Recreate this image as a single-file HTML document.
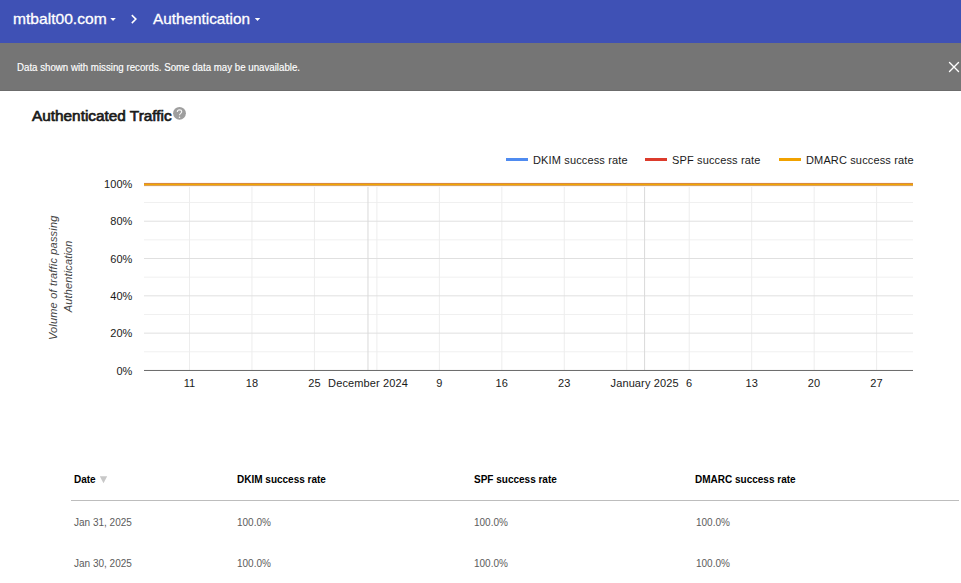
<!DOCTYPE html>
<html><head><meta charset="utf-8">
<style>
html,body{margin:0;padding:0;width:961px;height:583px;overflow:hidden;background:#fff;font-family:"Liberation Sans",sans-serif;}
.hdr{position:absolute;left:0;top:0;width:961px;height:43px;background:#3f51b5;color:#fff;}
.hdr .t{position:absolute;top:10.5px;line-height:16px;font-size:15px;white-space:nowrap;transform-origin:0 0;transform:scaleX(1.02);-webkit-text-stroke:0.3px #fff;}
.banner{position:absolute;left:0;top:43px;width:961px;height:48px;background:#757575;border-bottom:0;}
.banner .msg{position:absolute;left:16.8px;top:17px;line-height:16px;font-size:10px;color:#fff;white-space:nowrap;transform-origin:0 0;transform:scaleX(0.97);-webkit-text-stroke:0.15px #fff;}
.title{position:absolute;left:31.8px;top:107.5px;line-height:16px;font-size:15.5px;font-weight:normal;color:#1a1a1a;white-space:nowrap;transform-origin:0 0;transform:scaleX(0.99);-webkit-text-stroke:0.7px #1a1a1a;}
svg{position:absolute;left:0;top:0;}
.tbl{position:absolute;left:0;top:0;}
.th{position:absolute;font-size:10px;letter-spacing:0px;font-weight:bold;color:#000;white-space:nowrap;}
.td{position:absolute;font-size:10px;letter-spacing:0px;color:#5c5c5c;white-space:nowrap;}
</style></head><body>
<div class="hdr">
  <span class="t" style="left:12.5px;transform:scaleX(1.04)">mtbalt00.com</span>
  <span class="t" style="left:153px">Authentication</span>
</div>
<div class="banner"><span class="msg">Data shown with missing records. Some data may be unavailable.</span></div>
<div class="title">Authenticated Traffic</div>

<svg width="961" height="583" viewBox="0 0 961 583" font-family="Liberation Sans, sans-serif">
  <!-- header icons -->
  <path d="M110.3 18 L115.8 18 L113.05 20.9 Z" fill="#fff"/>
  <path d="M254.8 18 L260.2 18 L257.5 20.9 Z" fill="#fff"/>
  <path d="M131.8 15.1 L135.9 19.1 L131.8 23.1" fill="none" stroke="#fff" stroke-width="1.5"/>
  <!-- close X -->
  <path d="M949.5 62.5 L958.5 71.5 M958.5 62.5 L949.5 71.5" stroke="#fff" stroke-width="1.4" stroke-linecap="round"/>
  <rect x="0" y="90" width="961" height="1" fill="#6c6c6c"/>
  <!-- help icon -->
  <circle cx="179.5" cy="113.3" r="6.4" fill="#9e9e9e"/>
  <path d="M177.3 111.9 C177.3 110.6 178.3 109.9 179.5 109.9 C180.8 109.9 181.7 110.7 181.7 111.8 C181.7 113.3 179.5 113.5 179.5 115.3" fill="none" stroke="#f4f4f4" stroke-width="1.1"/>
  <circle cx="179.5" cy="117.2" r="0.75" fill="#f4f4f4"/>

  <!-- legend -->
  <rect x="506" y="158" width="22" height="3" fill="#4f8bf0"/>
  <text x="533" y="164" font-size="11" fill="#1a1a1a" letter-spacing="0.14">DKIM success rate</text>
  <rect x="645" y="158" width="22" height="3" fill="#dc3b2c"/>
  <text x="672" y="164" font-size="11" fill="#1a1a1a" letter-spacing="0.14">SPF success rate</text>
  <rect x="779" y="158" width="22" height="3" fill="#f1a200"/>
  <text x="806" y="164" font-size="11" fill="#1a1a1a" letter-spacing="0.14">DMARC success rate</text>

  <!-- minor horizontal gridlines -->
  <g fill="#f0f0f0">
    <rect x="144" y="202.06" width="769" height="1"/>
    <rect x="144" y="239.37" width="769" height="1"/>
    <rect x="144" y="276.68" width="769" height="1"/>
    <rect x="144" y="313.99" width="769" height="1"/>
    <rect x="144" y="351.30" width="769" height="1"/>
  </g>
  <!-- vertical weekly gridlines -->
  <g fill="#ededed">
    <rect x="189.00" y="184" width="1" height="186"/>
    <rect x="251.46" y="184" width="1" height="186"/>
    <rect x="313.93" y="184" width="1" height="186"/>
    <rect x="376.39" y="184" width="1" height="186"/>
    <rect x="438.86" y="184" width="1" height="186"/>
    <rect x="501.32" y="184" width="1" height="186"/>
    <rect x="563.78" y="184" width="1" height="186"/>
    <rect x="626.25" y="184" width="1" height="186"/>
    <rect x="688.71" y="184" width="1" height="186"/>
    <rect x="751.17" y="184" width="1" height="186"/>
    <rect x="813.64" y="184" width="1" height="186"/>
    <rect x="876.10" y="184" width="1" height="186"/>
  </g>
  <!-- major horizontal gridlines -->
  <g fill="#e0e0e0">
    <rect x="144" y="220.71" width="769" height="1"/>
    <rect x="144" y="258.02" width="769" height="1"/>
    <rect x="144" y="295.34" width="769" height="1"/>
    <rect x="144" y="332.65" width="769" height="1"/>
  </g>
  <!-- month lines -->
  <g fill="#d9d9d9">
    <rect x="367.47" y="184" width="1" height="186"/>
    <rect x="644.09" y="184" width="1" height="186"/>
  </g>
  <!-- axis -->
  <rect x="144" y="369.96" width="769" height="1" fill="#696969"/>
  <!-- data lines -->
  <rect x="144" y="182" width="769" height="1" fill="#fdf6f1"/>
  <rect x="144" y="183" width="769" height="1" fill="#d88a3e"/>
  <rect x="144" y="184" width="769" height="1" fill="#f2a600"/>
  <rect x="144" y="185" width="769" height="1" fill="#d9a05c"/>
  <rect x="144" y="186" width="769" height="1" fill="#fbf4ee"/>

  <!-- y labels -->
  <g font-size="11" fill="#1a1a1a" text-anchor="end" letter-spacing="0.1">
    <text x="132.5" y="187.5">100%</text>
    <text x="132.5" y="224.5">80%</text>
    <text x="132.5" y="262.5">60%</text>
    <text x="132.5" y="299.5">40%</text>
    <text x="132.5" y="337">20%</text>
    <text x="132.5" y="374.5">0%</text>
  </g>
  <!-- x labels -->
  <g font-size="11" fill="#1a1a1a" text-anchor="middle" letter-spacing="0.12">
    <text x="189.5" y="387">11</text>
    <text x="252" y="387">18</text>
    <text x="314.4" y="387">25</text>
    <text x="368" y="387">December 2024</text>
    <text x="439.4" y="387">9</text>
    <text x="501.8" y="387">16</text>
    <text x="564.3" y="387">23</text>
    <text x="644.6" y="387">January 2025</text>
    <text x="689.2" y="387">6</text>
    <text x="751.7" y="387">13</text>
    <text x="814.1" y="387">20</text>
    <text x="876.6" y="387">27</text>
  </g>
  <!-- y title -->
  <g transform="translate(61,277) rotate(-90)" font-size="11" font-style="italic" fill="#444" text-anchor="middle">
    <text x="-0.8" y="-4" letter-spacing="0.18">Volume of traffic passing</text>
    <text x="0.7" y="10.7" letter-spacing="0.14">Authentication</text>
  </g>

  <!-- table -->
  <rect x="71" y="500" width="888" height="1" fill="#bdbdbd"/>
  <path d="M99.8 476.3 L107.2 476.3 L103.5 483.2 Z" fill="#c8c8c8"/>
</svg>

<div class="th" style="left:74px;top:473.6px">Date</div>
<div class="th" style="left:237px;top:473.6px">DKIM success rate</div>
<div class="th" style="left:474px;top:473.6px">SPF success rate</div>
<div class="th" style="left:695px;top:473.6px">DMARC success rate</div>

<div class="td" style="left:74px;top:516.7px">Jan 31, 2025</div>
<div class="td" style="left:237px;top:516.7px">100.0%</div>
<div class="td" style="left:474px;top:516.7px">100.0%</div>
<div class="td" style="left:696px;top:516.7px">100.0%</div>

<div class="td" style="left:74px;top:557.7px">Jan 30, 2025</div>
<div class="td" style="left:237px;top:557.7px">100.0%</div>
<div class="td" style="left:474px;top:557.7px">100.0%</div>
<div class="td" style="left:696px;top:557.7px">100.0%</div>
</body></html>
